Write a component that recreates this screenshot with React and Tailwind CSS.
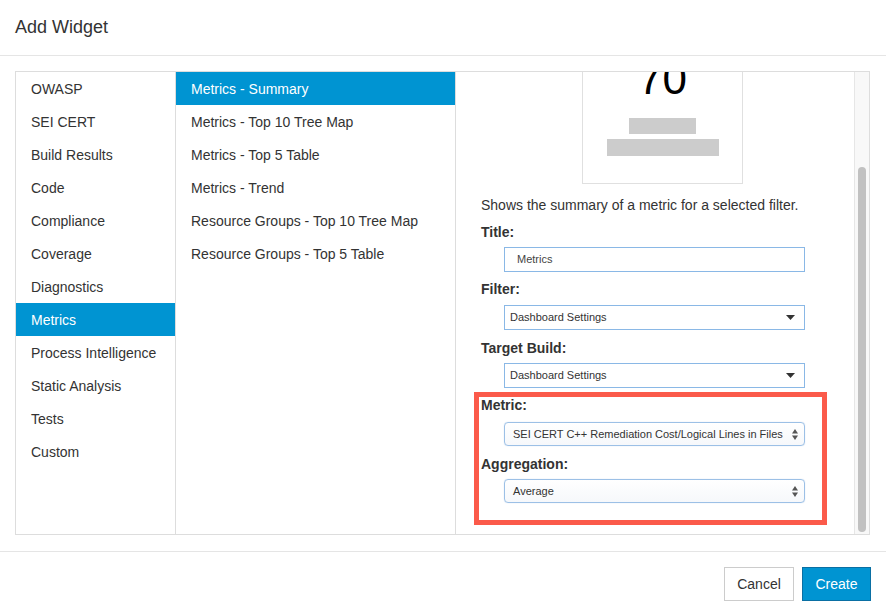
import React from 'react';

const categories = [
  'OWASP',
  'SEI CERT',
  'Build Results',
  'Code',
  'Compliance',
  'Coverage',
  'Diagnostics',
  'Metrics',
  'Process Intelligence',
  'Static Analysis',
  'Tests',
  'Custom',
];

const widgets = [
  'Metrics - Summary',
  'Metrics - Top 10 Tree Map',
  'Metrics - Top 5 Table',
  'Metrics - Trend',
  'Resource Groups - Top 10 Tree Map',
  'Resource Groups - Top 5 Table',
];

const DownCaret = () => (
  <svg width="9" height="5" viewBox="0 0 9 5" className="shrink-0">
    <path d="M0 0 H9 L4.5 5 Z" fill="#333" />
  </svg>
);

const UpDown = () => (
  <svg width="6" height="11" viewBox="0 0 6 11" className="shrink-0">
    <path d="M0 4.5 L3 0 L6 4.5 Z" fill="#555" />
    <path d="M0 6.5 L3 11 L6 6.5 Z" fill="#555" />
  </svg>
);

const Label = ({ children, className = '' }) => (
  <div className={`h-[20px] leading-[20px] text-[14px] font-bold text-[#333] ${className}`}>{children}</div>
);

const SelectBox = ({ value, className = '' }) => (
  <div className={`ml-[23px] w-[301px] h-[25px] border border-[#8ab8e6] bg-white flex items-center justify-between pl-[5px] pr-[9px] text-[11px] text-[#333] ${className}`}>
    <span>{value}</span>
    <DownCaret />
  </div>
);

const NativeSelect = ({ value, className = '' }) => (
  <div className={`ml-[23px] w-[301px] h-[24px] rounded-[4px] border border-[#9cc0e6] bg-gradient-to-b from-white to-[#f6f8fb] flex items-center justify-between pl-[8px] pr-[6px] text-[11px] text-[#333] shadow-[0_0_1px_rgba(80,140,210,0.4)] ${className}`}>
    <span>{value}</span>
    <UpDown />
  </div>
);

export default function App() {
  return (
    <div className="w-[886px] h-[616px] bg-white flex flex-col font-['Liberation_Sans',Arial,sans-serif] text-[#333] overflow-hidden">
      {/* Header */}
      <div className="h-[56px] shrink-0 border-b border-[#e5e5e5] flex items-center px-[15px]">
        <h1 className="text-[18px] text-[#333]">Add Widget</h1>
      </div>

      {/* Body */}
      <div className="pt-[15px] pl-[15px] pr-[16px] pb-[16px]">
        <div className="h-[464px] border border-[#ddd] flex">
          {/* Categories */}
          <div className="w-[160px] shrink-0 border-r border-[#ddd]">
            {categories.map((c) => (
              <div
                key={c}
                className={`h-[33px] flex items-center pt-[2px] pl-[15px] text-[14px] ${c === 'Metrics' ? 'bg-[#0094d2] text-white' : 'text-[#333]'}`}
              >
                {c}
              </div>
            ))}
          </div>

          {/* Widgets */}
          <div className="w-[280px] shrink-0 border-r border-[#ddd]">
            {widgets.map((w, i) => (
              <div
                key={w}
                className={`h-[33px] flex items-center pt-[2px] pl-[15px] text-[14px] ${i === 0 ? 'bg-[#0094d2] text-white' : 'text-[#333]'}`}
              >
                {w}
              </div>
            ))}
          </div>

          {/* Details */}
          <div className="flex-1 overflow-hidden">
            <div className="-mt-[42px] pl-[25px]">
              {/* Preview card */}
              <div className="ml-[101px] w-[161px] border border-[#e0e0e0] pt-[26px] pb-[27px] flex flex-col items-center">
                <div className="h-[45px] text-[44px] leading-none text-black">70</div>
                <div className="mt-[16px] w-[67px] h-[16px] bg-[#cccccc]" />
                <div className="mt-[5px] w-[112px] h-[17px] bg-[#cccccc]" />
              </div>

              <p className="mt-[11px] text-[14px] leading-[20px] text-[#333]">
                Shows the summary of a metric for a selected filter.
              </p>

              <Label className="mt-[7px]">Title:</Label>
              <div className="mt-[5px] ml-[23px] w-[301px] h-[25px] border border-[#8ab8e6] flex items-center pl-[12px] text-[11px] text-[#444]">
                Metrics
              </div>

              <Label className="mt-[7px]">Filter:</Label>
              <SelectBox className="mt-[6px]" value="Dashboard Settings" />

              <Label className="mt-[8px]">Target Build:</Label>
              <SelectBox className="mt-[5px]" value="Dashboard Settings" />

              {/* Highlighted group */}
              <div className="relative mt-[7px]">
                <Label>Metric:</Label>
                <NativeSelect className="mt-[7px]" value="SEI CERT C++ Remediation Cost/Logical Lines in Files" />
                <Label className="mt-[8px]">Aggregation:</Label>
                <NativeSelect className="mt-[5px]" value="Average" />
                <div className="absolute top-[-3px] left-[-7px] w-[353px] h-[133px] border-[5px] border-[#fb5a4a] pointer-events-none" />
              </div>
            </div>
          </div>

          {/* Scrollbar */}
          <div className="w-[15px] shrink-0 border-l border-[#e6e6e6] bg-[#f8f8f8] pt-[95px] pb-[2px] pl-[3px]">
            <div className="w-[8px] h-full rounded-full bg-[#c1c1c1]" />
          </div>
        </div>
      </div>

      {/* Footer */}
      <div className="border-t border-[#e5e5e5] flex justify-end gap-[8px] pt-[15px] pr-[15px]">
        <button className="w-[70px] h-[34px] border border-[#ccc] bg-white text-[14px] text-[#333]">Cancel</button>
        <button className="w-[69px] h-[34px] border border-[#0a6fa3] bg-[#0094d2] text-[14px] text-white">Create</button>
      </div>
    </div>
  );
}
